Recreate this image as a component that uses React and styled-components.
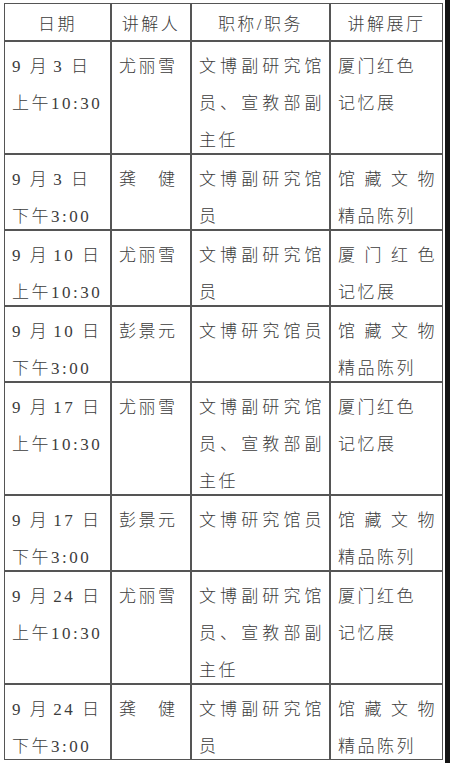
import styled, { createGlobalStyle } from 'styled-components';

const schedule = [
  {
    date: ['9 月\u200a3 日', '上午10:30'],
    guide: '尤丽雪',
    title: [['文博副研究馆', true], ['员、宣教部副', true], ['主任']],
    hall: [['厦门红色'], ['记忆展']],
  },
  {
    date: ['9 月\u200a3 日', '下午3:00'],
    guide: '龚\u3000健',
    title: [['文博副研究馆', true], ['员']],
    hall: [['馆藏文物', true], ['精品陈列']],
  },
  {
    date: ['9 月\u200a10 日', '上午10:30'],
    guide: '尤丽雪',
    title: [['文博副研究馆', true], ['员']],
    hall: [['厦门红色', true], ['记忆展']],
  },
  {
    date: ['9 月\u200a10 日', '下午3:00'],
    guide: '彭景元',
    title: [['文博研究馆员', true]],
    hall: [['馆藏文物', true], ['精品陈列']],
  },
  {
    date: ['9 月\u200a17 日', '上午10:30'],
    guide: '尤丽雪',
    title: [['文博副研究馆', true], ['员、宣教部副', true], ['主任']],
    hall: [['厦门红色'], ['记忆展']],
  },
  {
    date: ['9 月\u200a17 日', '下午3:00'],
    guide: '彭景元',
    title: [['文博研究馆员', true]],
    hall: [['馆藏文物', true], ['精品陈列']],
  },
  {
    date: ['9 月\u200a24 日', '上午10:30'],
    guide: '尤丽雪',
    title: [['文博副研究馆', true], ['员、宣教部副', true], ['主任']],
    hall: [['厦门红色'], ['记忆展']],
  },
  {
    date: ['9 月\u200a24 日', '下午3:00'],
    guide: '龚\u3000健',
    title: [['文博副研究馆', true], ['员']],
    hall: [['馆藏文物', true], ['精品陈列']],
  },
];

const headers = ['日期', '讲解人', '职称/职务', '讲解展厅'];

function App() {
  return (
    <Page>
      <GlobalStyle />
      <Table>
        {headers.map((label) => (
          <HeadCell key={label}>{label}</HeadCell>
        ))}
        {schedule.map((row, i) => (
          <Row key={i}>
            <Cell>
              <Lines>
                {row.date.map((text) => (
                  <Line key={text}>{text}</Line>
                ))}
              </Lines>
            </Cell>
            <Cell>
              <Lines>
                <Line>{row.guide}</Line>
              </Lines>
            </Cell>
            <Cell>
              <Lines>
                {row.title.map(([text, spread]) => (
                  <Line key={text} $spread={spread}>
                    {text}
                  </Line>
                ))}
              </Lines>
            </Cell>
            <Cell>
              <Lines>
                {row.hall.map(([text, spread]) => (
                  <Line key={text} $spread={spread}>
                    {text}
                  </Line>
                ))}
              </Lines>
            </Cell>
          </Row>
        ))}
      </Table>
    </Page>
  );
}

const GlobalStyle = createGlobalStyle`
  html, body {
    margin: 0;
    padding: 0;
    background: #fff;
  }
`;

const Page = styled.main`
  box-sizing: border-box;
  width: 450px;
  height: 763px;
  padding: 3px 0 0 4px;
  border-right: 5px solid #141414;
  overflow: hidden;
  font-family: 'Liberation Serif', 'Noto Sans CJK SC', serif;
  font-size: 17px;
  font-weight: 300;
  letter-spacing: 2.5px;
  color: #3c3c3c;
`;

const Table = styled.div`
  display: grid;
  grid-template-columns: 105px 78px 137px 111px;
  gap: 2px;
  width: max-content;
  border: 1px solid #555;
  background: #555;
`;

const Row = styled.div`
  display: contents;
`;

const HeadCell = styled.div`
  background: #fff;
  height: 36px;
  padding-top: 3px;
  box-sizing: border-box;
  line-height: 36px;
  text-align: center;
  white-space: nowrap;
`;

const Cell = styled.div`
  background: #fff;
  padding: 6px 5px 0 7px;
`;

const Lines = styled.div`
  margin-bottom: -6px;
`;

const Line = styled.div`
  line-height: 37px;
  white-space: nowrap;
  text-align: ${({ $spread }) => ($spread ? 'justify' : 'left')};
  text-align-last: ${({ $spread }) => ($spread ? 'justify' : 'left')};
`;

export default App;
